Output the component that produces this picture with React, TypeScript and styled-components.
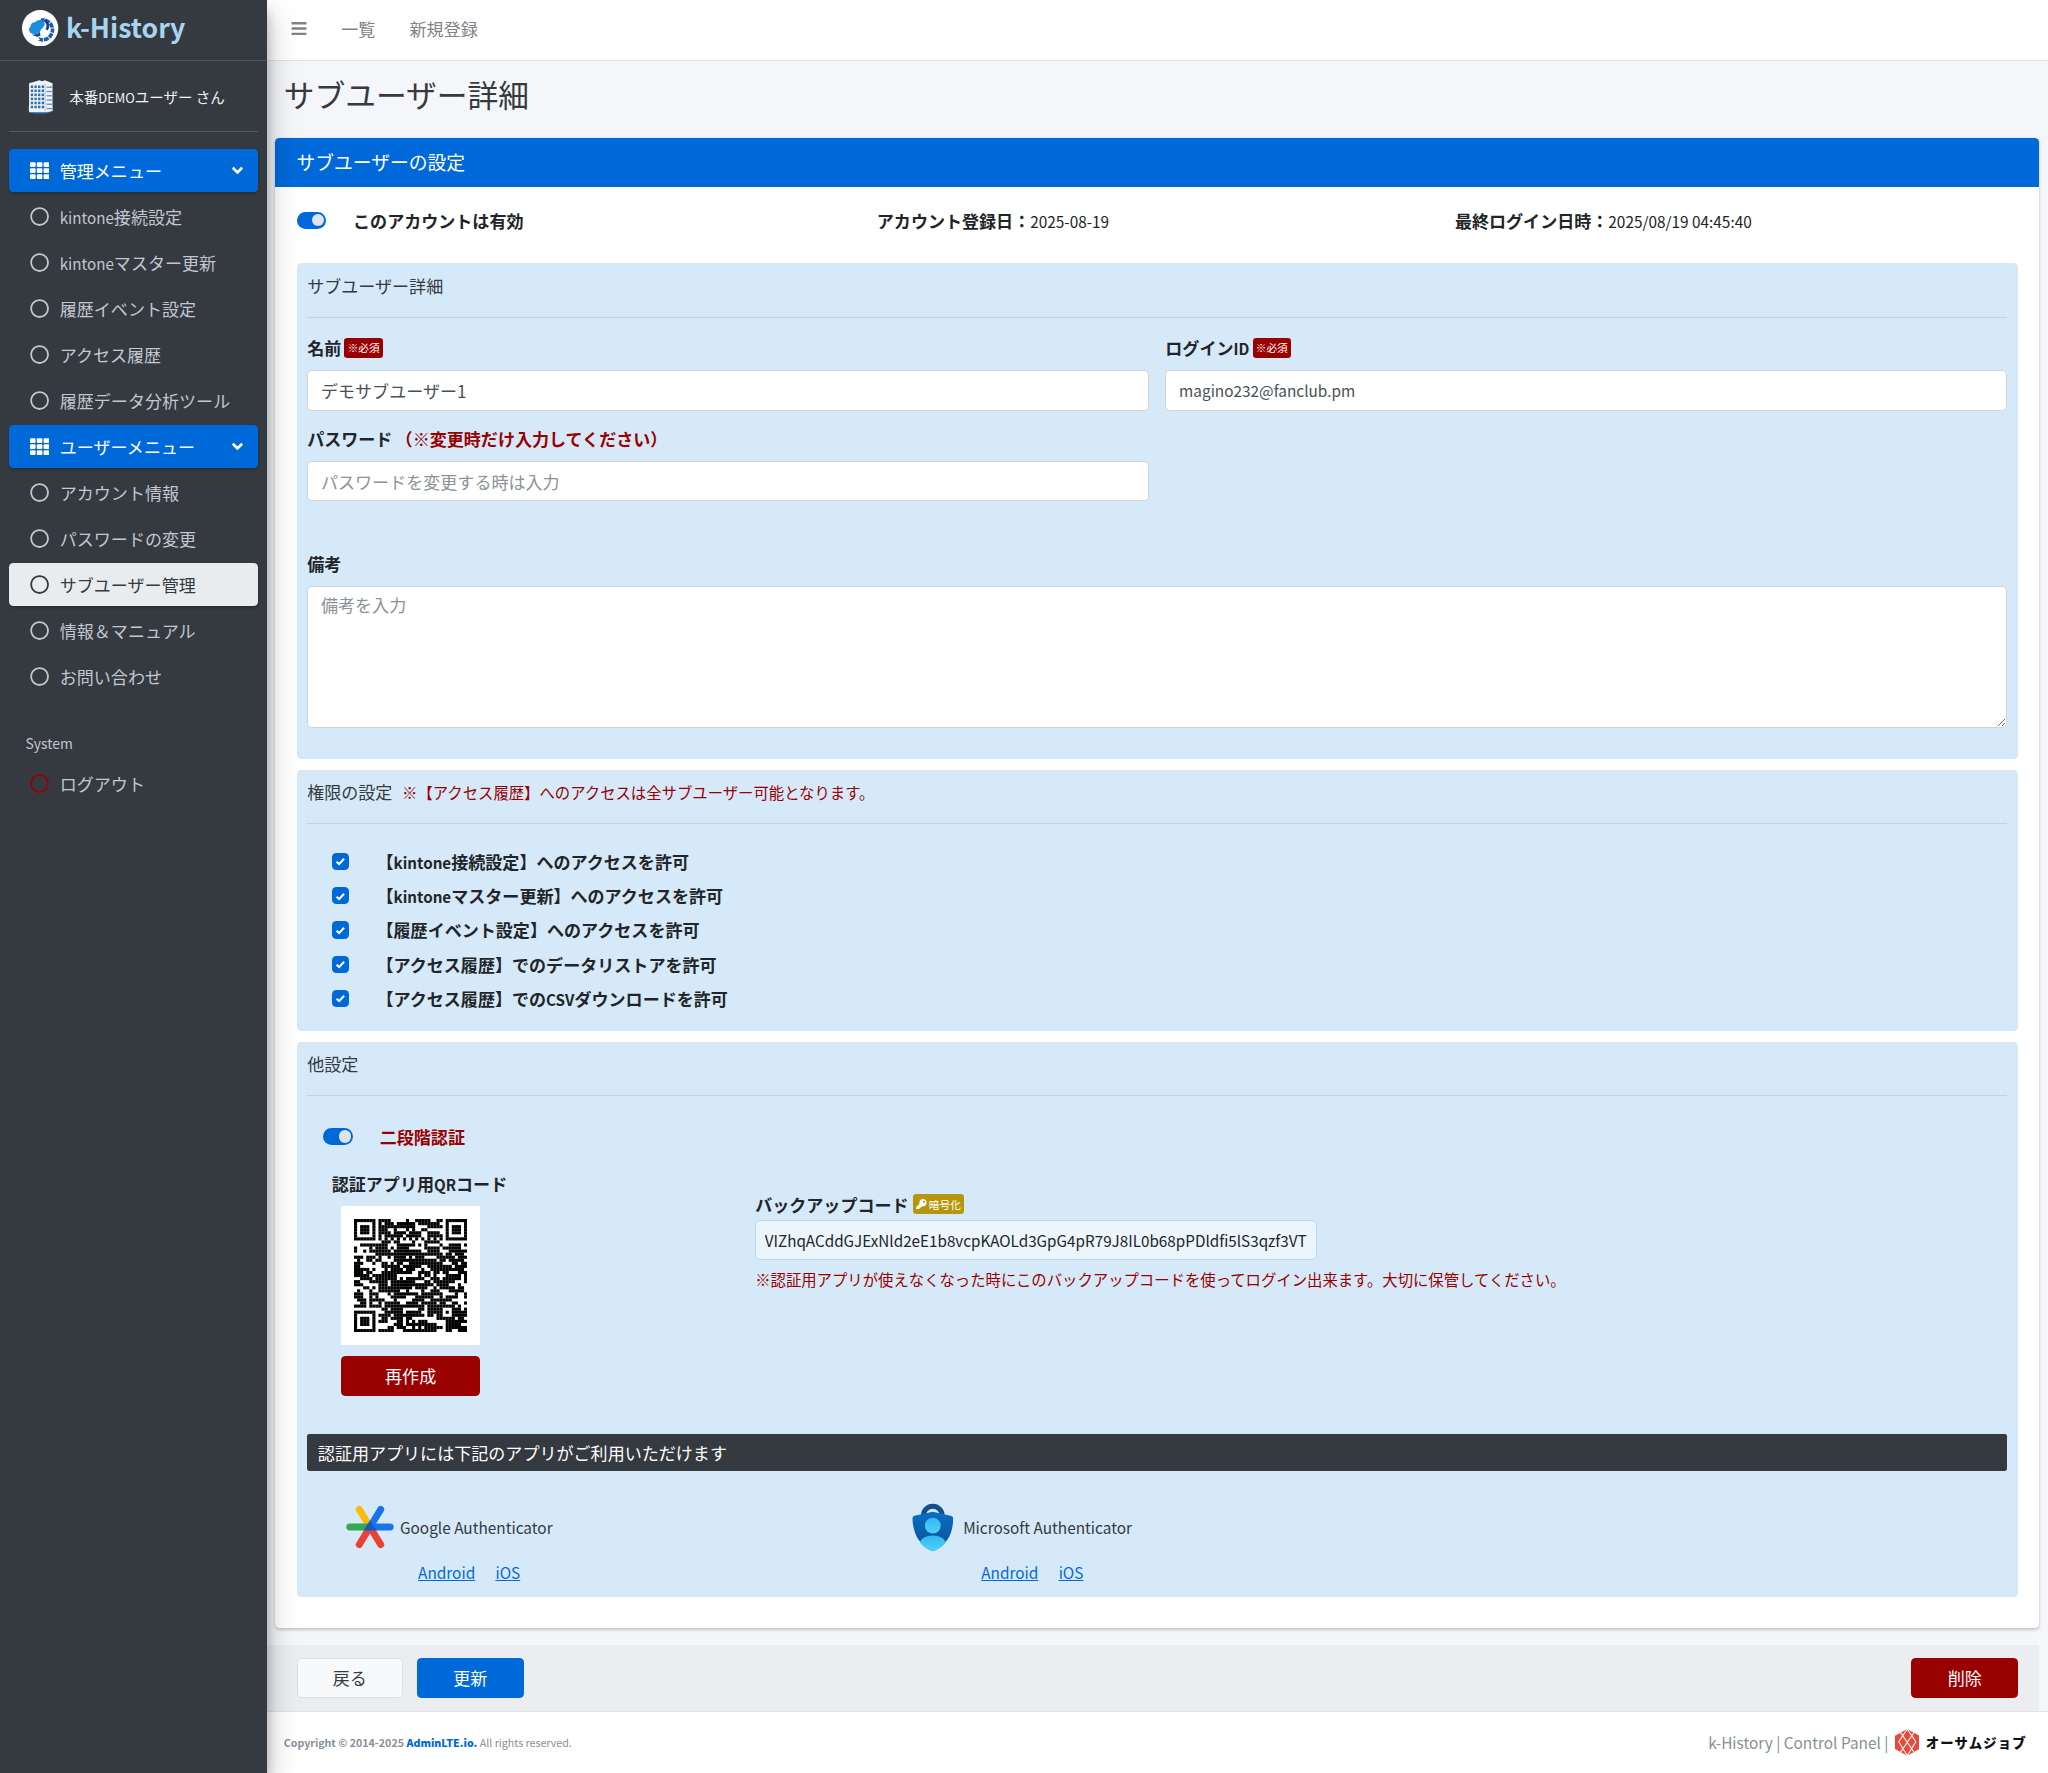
import React from "react";
import styled, { createGlobalStyle } from "styled-components";
import { FaAngleDown, FaBars, FaKey, FaRegCircle, FaTh } from "react-icons/fa";

const Global = createGlobalStyle`
  html, body { margin: 0; padding: 0; background: #f4f6f9; }
  body { font-family: "Noto Sans CJK JP", "Noto Sans", sans-serif; font-size: 16px; color: #212529; }
  #root { zoom: 1.066667; }
  * { box-sizing: border-box; }
  input::placeholder, textarea::placeholder { color: #8b9299; opacity: 1; }
`;

const Page = styled.div`
  display: flex;
  width: 1920px;
  height: 1662px;
  overflow: hidden;
`;
const Lat = styled.span`
  font-size: 0.89em;
`;

const Sidebar = styled.aside`
  position: relative;
  z-index: 2;
  flex: 0 0 250px;
  background: #343a40;
  box-shadow: 0 14px 28px rgba(0, 0, 0, 0.25), 0 10px 10px rgba(0, 0, 0, 0.22);
`;
const Brand = styled.div`
  display: flex;
  align-items: center;
  gap: 7px;
  height: 57px;
  padding: 0 0 4px 21px;
  border-bottom: 1px solid #4b545c;
`;
const BrandName = styled.span`
  font-size: 25px;
  font-weight: 700;
  line-height: 1;
  color: #a8d4f2;
`;
const UserPanel = styled.div`
  display: flex;
  align-items: center;
  gap: 15px;
  height: 67px;
  margin: 0 8px;
  padding-left: 18px;
  border-bottom: 1px solid #4f5962;
`;
const UserName = styled.span`
  font-size: 13.6px;
  color: #f2f3f4;
`;
const Nav = styled.nav`
  display: flex;
  flex-direction: column;
  gap: 3.15px;
  margin-top: 16px;
  padding: 0 8px;
`;
const NavItem = styled.div<{ $kind?: "head" | "active" }>`
  display: flex;
  align-items: center;
  height: 40px;
  padding: 0 12px 0 20px;
  gap: 10px;
  border-radius: 4px;
  font-size: 16px;
  color: ${(p) => (p.$kind === "head" ? "#fff" : p.$kind === "active" ? "#343a40" : "#c2c7d0")};
  background: ${(p) => (p.$kind === "head" ? "#0069d9" : p.$kind === "active" ? "#e9ecef" : "transparent")};
  box-shadow: ${(p) => (p.$kind ? "0 1px 3px rgba(0,0,0,.2)" : "none")};
  svg.lead { flex: 0 0 18px; width: 18px; height: 18px; }
  svg.lead.red { color: #990000; }
  svg.tail { margin-left: auto; width: 14px; height: 16px; }
`;
const NavHeader = styled.div`
  margin-top: 24.5px;
  padding: 0 0 0 16px;
  height: 29px;
  line-height: 29px;
  font-size: 13px;
  color: #c2c7d0;
`;

const Main = styled.div`
  flex: 1;
  display: flex;
  flex-direction: column;
  min-width: 0;
`;
const TopBar = styled.header`
  display: flex;
  align-items: center;
  flex: 0 0 57px;
  padding: 0 0 2px 23px;
  gap: 32px;
  background: #fff;
  border-bottom: 1px solid #dee2e6;
  color: #7f8388;
  svg { width: 15px; height: 16px; margin-right: 0; }
`;
const TopLink = styled.span`
  font-size: 16px;
`;
const Title = styled.h1`
  margin: 0;
  flex: 0 0 72px;
  padding: 8px 0 0 16px;
  font-size: 28.8px;
  line-height: 46px;
  font-weight: 400;
  color: #343a40;
`;
const Card = styled.section`
  margin: 0 8px;
  height: 1397px;
  background: #fff;
  border-radius: 4px;
  box-shadow: 0 0 1px rgba(0, 0, 0, 0.125), 0 1px 3px rgba(0, 0, 0, 0.2);
`;
const CardHead = styled.div`
  height: 46px;
  padding: 0 20px 2px;
  display: flex;
  align-items: center;
  background: #0069d9;
  color: #fff;
  font-size: 17.6px;
  border-radius: 4px 4px 0 0;
`;
const CardBody = styled.div`
  padding: 0 20px;
`;
const StatusRow = styled.div`
  display: grid;
  grid-template-columns: 544px 542px 1fr;
  align-items: center;
  height: 72px;
  padding-bottom: 9px;
`;
const ToggleWrap = styled.div`
  display: flex;
  align-items: center;
  gap: 25px;
`;
const Toggle = styled.span`
  position: relative;
  display: inline-block;
  flex: 0 0 28px;
  width: 28px;
  height: 15.6px;
  border-radius: 8px;
  background: #0069d9;
  &::after {
    content: "";
    position: absolute;
    right: 2px;
    top: 2px;
    width: 11.6px;
    height: 11.6px;
    border-radius: 50%;
    background: #dfe4ea;
  }
`;
const StrongLabel = styled.span<{ $red?: boolean }>`
  font-weight: 700;
  font-size: 16px;
  color: ${(p) => (p.$red ? "#990000" : "#212529")};
`;
const SmallValue = styled.span`
  font-size: 14.4px;
`;
const Panel = styled.div<{ $pb?: number }>`
  margin-bottom: 10px;
  padding: 0 10px ${(p) => p.$pb ?? 0}px;
  background: #d6e9f8;
  border-radius: 4px;
`;
const PanelHead = styled.div`
  display: flex;
  align-items: center;
  gap: 9px;
  height: 51px;
  padding-bottom: 9px;
  border-bottom: 1px solid #bed3e4;
  font-size: 16px;
  color: #343a40;
`;
const RedNote = styled.span`
  font-size: 14.4px;
  color: #990000;
`;
const FieldGrid = styled.div`
  display: grid;
  grid-template-columns: 789.5px 789.5px;
  column-gap: 15px;
  padding-top: 16px;
`;
const Field = styled.div<{ $top?: number }>`
  min-width: 0;
  margin-top: ${(p) => p.$top ?? 0}px;
`;
const Label = styled.label`
  display: flex;
  align-items: center;
  gap: 3px;
  height: 24px;
  margin-bottom: 9px;
  font-size: 16px;
  font-weight: 700;
  color: #212529;
`;
const Badge = styled.span<{ $gold?: boolean }>`
  display: inline-flex;
  align-items: center;
  gap: 2px;
  height: 18.5px;
  padding: 0 3px;
  border-radius: 3px;
  font-size: 10px;
  font-weight: 400;
  color: #fff;
  background: ${(p) => (p.$gold ? "#b8960c" : "#990000")};
  svg { width: 10px; height: 10px; }
`;
const TextInput = styled.input<{ $latin?: boolean }>`
  display: block;
  width: 100%;
  height: 38px;
  padding: 0 12px;
  border: 1px solid #ced4da;
  border-radius: 4px;
  background: #fff;
  font-family: inherit;
  font-size: ${(p) => (p.$latin ? 14.4 : 16)}px;
  color: #495057;
`;
const TextArea = styled.textarea`
  display: block;
  width: 100%;
  height: 134px;
  padding: 5px 12px;
  border: 1px solid #ced4da;
  border-radius: 4px;
  font-family: inherit;
  font-size: 16px;
  line-height: 24px;
  color: #495057;
`;
const CheckList = styled.div`
  padding: 19px 0 15px 23px;
`;
const CheckRow = styled.div`
  display: flex;
  align-items: center;
  gap: 26px;
  height: 32px;
`;
const CheckBox = styled.span`
  display: inline-flex;
  align-items: center;
  justify-content: center;
  flex: 0 0 16px;
  width: 16px;
  height: 16px;
  border-radius: 4px;
  background: #0069d9;
`;
const OtpToggleRow = styled.div`
  padding: 26px 0 0 15px;
  height: 57px;
  display: flex;
  align-items: flex-start;
`;
const OtpRow = styled.div`
  display: flex;
  margin-top: 13px;
`;
const QrCol = styled.div`
  flex: 0 0 420px;
  padding-left: 23px;
`;
const QrTitle = styled.div`
  height: 24px;
  line-height: 24px;
  margin-bottom: 9px;
  font-weight: 700;
  font-size: 16px;
  color: #212529;
`;
const QrBox = styled.div`
  width: 130px;
  height: 130px;
  margin-left: 9px;
  padding: 12px;
  background: #fff;
`;
const DangerButton = styled.button<{ $w?: number }>`
  display: block;
  width: ${(p) => p.$w ?? 100}px;
  height: 38px;
  border: 1px solid #990000;
  border-radius: 4px;
  background: #990000;
  color: #fff;
  font-family: inherit;
  font-size: 16px;
`;
const RegenButton = styled(DangerButton)`
  width: 130px;
  margin: 10px 0 0 9px;
`;
const BackupCol = styled.div`
  flex: 1;
  padding-top: 19px;
`;
const BackupLabel = styled(Label)`
  gap: 4px;
  margin-bottom: 2.5px;
`;
const BackupInput = styled.input`
  display: block;
  width: 527px;
  height: 37.5px;
  padding: 0 7px 0 8px;
  border: 1px solid #b4d7f2;
  border-radius: 4px;
  background: #ecf5fc;
  font-family: inherit;
  font-size: 14.3px;
  color: #212529;
`;
const BackupNote = styled.div`
  margin-top: 8px;
  font-size: 14.4px;
  line-height: 21px;
  color: #990000;
`;
const DarkBar = styled.div`
  display: flex;
  align-items: center;
  height: 34px;
  margin-top: 36px;
  padding-left: 10px;
  background: #343a40;
  color: #fff;
  border-radius: 2px;
  font-size: 16px;
`;
const AppsRow = styled.div`
  display: flex;
  padding: 29px 0 10px 36px;
`;
const AppCol = styled.div`
  flex: 0 0 531px;
`;
const AppTop = styled.div`
  display: flex;
  align-items: center;
  height: 48px;
  font-size: 14.4px;
  color: #343a40;
`;
const AppLinks = styled.div<{ $left: number }>`
  display: flex;
  gap: 19px;
  height: 24px;
  margin-top: 7px;
  padding-left: ${(p) => p.$left}px;
  font-size: 14.4px;
  line-height: 24px;
`;
const AppLink = styled.a`
  color: #0069d9;
  text-decoration: underline;
`;
const ActionBar = styled.div`
  display: flex;
  align-items: center;
  height: 62px;
  margin: 16px 8px 0 0;
  padding: 0 20px 0 28px;
  background: #ebedf1;
`;
const GhostButton = styled.button`
  width: 100px;
  height: 38px;
  margin-right: 13px;
  border: 1px solid #dde0e3;
  border-radius: 4px;
  background: #f8f9fa;
  color: #343a40;
  font-family: inherit;
  font-size: 16px;
`;
const PrimaryButton = styled(GhostButton)`
  margin-right: auto;
  border-color: #0069d9;
  background: #0069d9;
  color: #fff;
`;
const Footer = styled.footer`
  flex: 1;
  display: flex;
  align-items: center;
  justify-content: space-between;
  padding: 0 20px 0 16px;
  background: #fff;
  border-top: 1px solid #dee2e6;
`;
const Copyright = styled.div`
  font-size: 10px;
  font-weight: 700;
  color: #869099;
  b { color: #0069d9; }
  span { font-weight: 400; }
`;
const FooterRight = styled.div`
  display: flex;
  align-items: center;
  gap: 6px;
  font-size: 14.4px;
  color: #869099;
`;
const CompanyName = styled.span`
  font-size: 12.5px;
  font-weight: 900;
  letter-spacing: 1.1px;
  color: #111;
`;

/* ---------- drawings ---------- */
const BrandLogo = () => (
  <svg width="34" height="34" viewBox="0 0 34 34">
    <circle cx="17" cy="17" r="17" fill="#fff" />
    <circle cx="19.2" cy="18.6" r="9.4" fill="none" stroke="#1a5fb4" strokeWidth="3.4" strokeDasharray="4.6 .8" strokeDashoffset="2" />
    <path d="M19 7a12 12 0 0 0-9 24l7-3-8-8z" fill="#fff" />
    <path d="M21 9.5a6 6 0 0 1 2 9" fill="none" stroke="#123f80" strokeWidth="2.4" />
    <path d="M10.5 22.5a4 4 0 0 1-2.5-7c0-3 2.5-4.5 4.5-4 1.5-2.5 6-3 8-.5 1.5 1.8.8 3.5-.5 5-1 1.3-2 1.8-2.5 3-1 2-2.5 3.5-7 3.5z" fill="#1c8ce0" />
    <path d="M9 23c3 .5 6-.5 7.5-2.5l1 3.5c-2 1.5-5 1.3-8.5-1z" fill="#134f9b" />
  </svg>
);

const BuildingIcon = () => {
  const cells: React.ReactElement[] = [];
  for (let r = 0; r < 6; r++) {
    for (let c = 0; c < 4; c++) {
      cells.push(<rect key={`${r}-${c}`} x={2.6 + c * 3.4} y={7 + r * 3.8} width="2.2" height="2.4" fill="#2f70b0" />);
    }
  }
  const bands = [8, 12, 16, 20, 24, 28].map((y) => (
    <rect key={y} x="17.5" y={y} width="5" height="1.3" fill="#6b96c2" />
  ));
  return (
    <svg width="24" height="34" viewBox="0 0 24 34">
      <path d="M0 30c2 3 7 4 12 4s10-1 12-4V26H0z" fill="#255f9e" />
      <path d="M1 5l10-3 2 1 3-1 7 3v26l-5 1H1z" fill="#eef3f8" />
      <path d="M16 5.5v26" stroke="#9db9d6" strokeWidth=".8" />
      {cells}
      {bands}
    </svg>
  );
};

const QrCode = () => {
  const n = 37;
  const rects: React.ReactElement[] = [];
  let seed = 20250819;
  const rnd = () => {
    seed = (seed * 1664525 + 1013904223) >>> 0;
    return (seed >>> 16) & 3;
  };
  const finder = (x: number, y: number, ox: number, oy: number) => {
    const dx = x - ox;
    const dy = y - oy;
    if (dx < 0 || dy < 0 || dx > 6 || dy > 6) return false;
    if (dx === 0 || dy === 0 || dx === 6 || dy === 6) return true;
    return dx >= 2 && dx <= 4 && dy >= 2 && dy <= 4;
  };
  let prev = false;
  for (let y = 0; y < n; y++) {
    for (let x = 0; x < n; x++) {
      const r = rnd();
      let on = r === 0 ? prev : r % 2 === 1;
      prev = on;
      const tl = x < 8 && y < 8;
      const tr = x >= n - 8 && y < 8;
      const bl = x < 8 && y >= n - 8;
      const dax = x - 28;
      const day = y - 28;
      if (tl) on = finder(x, y, 0, 0);
      else if (tr) on = finder(x, y, n - 7, 0);
      else if (bl) on = finder(x, y, 0, n - 7);
      else if (dax >= 0 && dax <= 4 && day >= 0 && day <= 4)
        on = dax === 0 || day === 0 || dax === 4 || day === 4 || (dax === 2 && day === 2);
      else if (y === 6) on = x % 2 === 0;
      else if (x === 6) on = y % 2 === 0;
      if (on) rects.push(<rect key={`${x}-${y}`} x={x} y={y} width="1.02" height="1.02" />);
    }
  }
  return (
    <svg width="106" height="106" viewBox={`0 0 ${n} ${n}`} fill="#000">
      {rects}
    </svg>
  );
};

const GoogleAuth = () => (
  <svg width="45" height="45" viewBox="0 0 45 45" style={{ marginRight: 6 }}>
    <g strokeWidth="6.4" strokeLinecap="round" fill="none">
      <path d="M22.5 22.5L12.4 6" stroke="#fbbc04" />
      <path d="M22.5 22.5H3.5" stroke="#34a853" />
      <path d="M22.5 22.5L12.4 39" stroke="#ea4335" />
      <path d="M22.5 22.5L32.6 39" stroke="#ea4335" />
      <path d="M22.5 22.5H41.5" stroke="#1a73e8" />
      <path d="M22.5 22.5L32.6 6" stroke="#1a73e8" />
    </g>
    <path d="M22.5 16.5L28.5 25.7H16.5z" fill="#185abc" />
  </svg>
);

const MsAuth = () => (
  <svg width="39" height="47" viewBox="0 0 42 49" style={{ marginRight: 9 }}>
    <defs>
      <linearGradient id="ms1" x1="0" y1="0" x2="0" y2="1">
        <stop offset="0" stopColor="#0a6fc2" />
        <stop offset="1" stopColor="#0a4f94" />
      </linearGradient>
      <linearGradient id="ms2" x1="0" y1="0" x2="0" y2="1">
        <stop offset="0" stopColor="#35b8f1" />
        <stop offset="1" stopColor="#50d0f8" />
      </linearGradient>
    </defs>
    <path d="M9 17V13a12 12 0 0 1 24 0v4h-5v-4a7 7 0 0 0-14 0v4z" fill="#124f8c" />
    <path d="M21 9L39 13c2 .5 2.5 1.5 2.5 3 0 14-5 26-20.5 33C6 42 1 30 .5 16c0-1.5.5-2.5 2-3z" fill="url(#ms1)" />
    <circle cx="21" cy="23" r="8" fill="url(#ms2)" />
    <path d="M8 40c1-4 6-7 13-7s12 3 13 7c-3 4-7 7-13 9-6-2-10-5-13-9z" fill="url(#ms2)" />
  </svg>
);

const CompanyMark = () => (
  <svg width="23" height="25" viewBox="0 0 23 25">
    <path d="M11.5 0L23 6.25v12.5L11.5 25 0 18.75V6.25z" fill="#e54b3c" />
    <g stroke="#fff" strokeWidth="1" fill="none">
      <path d="M5 3l13 19M18 3L5 22M11.5 0l8 12-8 13-8-13z" />
    </g>
  </svg>
);

const TickIcon = () => (
  <svg width="10" height="10" viewBox="0 0 10 10">
    <path d="M1.5 5.3l2.4 2.3 4.6-5" fill="none" stroke="#fff" strokeWidth="2" />
  </svg>
);

/* Latin runs are set slightly smaller than the kana and kanji around them */
const mixed = (text: string) =>
  text.split(/([A-Za-z]+)/).map((part, i) => (i % 2 ? <Lat key={i}>{part}</Lat> : part));

const menuA = ["kintone接続設定", "kintoneマスター更新", "履歴イベント設定", "アクセス履歴", "履歴データ分析ツール"];
const perms = [
  "【kintone接続設定】へのアクセスを許可",
  "【kintoneマスター更新】へのアクセスを許可",
  "【履歴イベント設定】へのアクセスを許可",
  "【アクセス履歴】でのデータリストアを許可",
  "【アクセス履歴】でのCSVダウンロードを許可",
];

export default function App() {
  return (
    <>
      <Global />
      <Page>
        <Sidebar>
          <Brand>
            <BrandLogo />
            <BrandName>k-History</BrandName>
          </Brand>
          <UserPanel>
            <BuildingIcon />
            <UserName>{mixed("本番DEMOユーザー さん")}</UserName>
          </UserPanel>
          <Nav>
            <NavItem $kind="head">
              <FaTh className="lead" />
              管理メニュー
              <FaAngleDown className="tail" />
            </NavItem>
            {menuA.map((m) => (
              <NavItem key={m}>
                <FaRegCircle className="lead" />
                <span>{mixed(m)}</span>
              </NavItem>
            ))}
            <NavItem $kind="head">
              <FaTh className="lead" />
              ユーザーメニュー
              <FaAngleDown className="tail" />
            </NavItem>
            <NavItem>
              <FaRegCircle className="lead" />
              アカウント情報
            </NavItem>
            <NavItem>
              <FaRegCircle className="lead" />
              パスワードの変更
            </NavItem>
            <NavItem $kind="active">
              <FaRegCircle className="lead" />
              サブユーザー管理
            </NavItem>
            <NavItem>
              <FaRegCircle className="lead" />
              情報＆マニュアル
            </NavItem>
            <NavItem>
              <FaRegCircle className="lead" />
              お問い合わせ
            </NavItem>
            <NavHeader>System</NavHeader>
            <NavItem>
              <FaRegCircle className="lead red" />
              ログアウト
            </NavItem>
          </Nav>
        </Sidebar>
        <Main>
          <TopBar>
            <FaBars />
            <TopLink>一覧</TopLink>
            <TopLink>新規登録</TopLink>
          </TopBar>
          <Title>サブユーザー詳細</Title>
          <Card>
            <CardHead>サブユーザーの設定</CardHead>
            <CardBody>
              <StatusRow>
                <ToggleWrap>
                  <Toggle />
                  <StrongLabel>このアカウントは有効</StrongLabel>
                </ToggleWrap>
                <div>
                  <StrongLabel>アカウント登録日：</StrongLabel>
                  <SmallValue>2025-08-19</SmallValue>
                </div>
                <div>
                  <StrongLabel>最終ログイン日時：</StrongLabel>
                  <SmallValue>2025/08/19 04:45:40</SmallValue>
                </div>
              </StatusRow>
              <Panel $pb={29}>
                <PanelHead>サブユーザー詳細</PanelHead>
                <FieldGrid>
                  <Field>
                    <Label>
                      名前<Badge>※必須</Badge>
                    </Label>
                    <TextInput readOnly value="デモサブユーザー1" />
                  </Field>
                  <Field>
                    <Label>
                      <span>{mixed("ログインID")}</span>
                      <Badge>※必須</Badge>
                    </Label>
                    <TextInput $latin readOnly value="magino232@fanclub.pm" />
                  </Field>
                  <Field $top={14}>
                    <Label>
                      パスワード <StrongLabel $red>（※変更時だけ入力してください）</StrongLabel>
                    </Label>
                    <TextInput readOnly placeholder="パスワードを変更する時は入力" />
                  </Field>
                </FieldGrid>
                <Field $top={46}>
                  <Label>備考</Label>
                  <TextArea readOnly placeholder="備考を入力" />
                </Field>
              </Panel>
              <Panel>
                <PanelHead>
                  権限の設定
                  <RedNote>※【アクセス履歴】へのアクセスは全サブユーザー可能となります。</RedNote>
                </PanelHead>
                <CheckList>
                  {perms.map((p) => (
                    <CheckRow key={p}>
                      <CheckBox>
                        <TickIcon />
                      </CheckBox>
                      <StrongLabel>{mixed(p)}</StrongLabel>
                    </CheckRow>
                  ))}
                </CheckList>
              </Panel>
              <Panel>
                <PanelHead>他設定</PanelHead>
                <OtpToggleRow>
                  <ToggleWrap>
                    <Toggle />
                    <StrongLabel $red>二段階認証</StrongLabel>
                  </ToggleWrap>
                </OtpToggleRow>
                <OtpRow>
                  <QrCol>
                    <QrTitle>{mixed("認証アプリ用QRコード")}</QrTitle>
                    <QrBox>
                      <QrCode />
                    </QrBox>
                    <RegenButton>再作成</RegenButton>
                  </QrCol>
                  <BackupCol>
                    <BackupLabel>
                      バックアップコード
                      <Badge $gold>
                        <FaKey />
                        暗号化
                      </Badge>
                    </BackupLabel>
                    <BackupInput readOnly value="VIZhqACddGJExNld2eE1b8vcpKAOLd3GpG4pR79J8IL0b68pPDldfi5lS3qzf3VT" />
                    <BackupNote>
                      ※認証用アプリが使えなくなった時にこのバックアップコードを使ってログイン出来ます。大切に保管してください。
                    </BackupNote>
                  </BackupCol>
                </OtpRow>
                <DarkBar>認証用アプリには下記のアプリがご利用いただけます</DarkBar>
                <AppsRow>
                  <AppCol>
                    <AppTop>
                      <GoogleAuth />
                      Google Authenticator
                    </AppTop>
                    <AppLinks $left={68}>
                      <AppLink>Android</AppLink>
                      <AppLink>iOS</AppLink>
                    </AppLinks>
                  </AppCol>
                  <AppCol>
                    <AppTop>
                      <MsAuth />
                      Microsoft Authenticator
                    </AppTop>
                    <AppLinks $left={65}>
                      <AppLink>Android</AppLink>
                      <AppLink>iOS</AppLink>
                    </AppLinks>
                  </AppCol>
                </AppsRow>
              </Panel>
            </CardBody>
          </Card>
          <ActionBar>
            <GhostButton>戻る</GhostButton>
            <PrimaryButton>更新</PrimaryButton>
            <DangerButton>削除</DangerButton>
          </ActionBar>
          <Footer>
            <Copyright>
              Copyright © 2014-2025 <b>AdminLTE.io.</b> <span>All rights reserved.</span>
            </Copyright>
            <FooterRight>
              k-History | Control Panel |
              <CompanyMark />
              <CompanyName>オーサムジョブ</CompanyName>
            </FooterRight>
          </Footer>
        </Main>
      </Page>
    </>
  );
}
